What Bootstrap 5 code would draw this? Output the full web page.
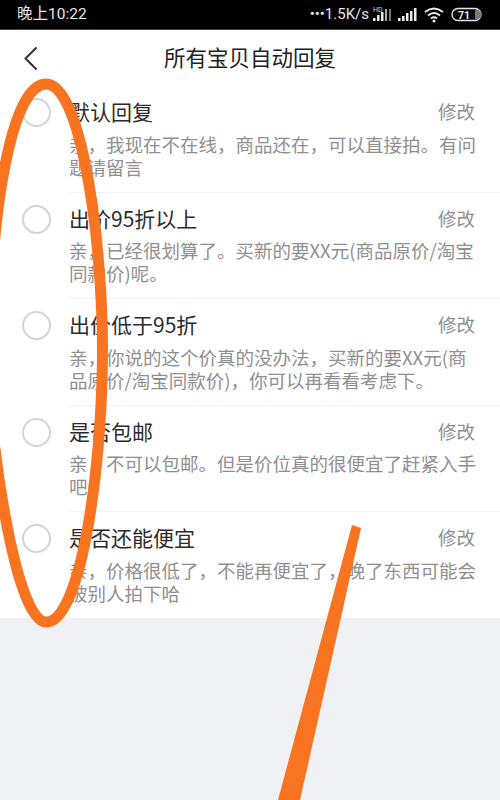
<!DOCTYPE html>
<html lang="zh">
<head>
<meta charset="utf-8">
<title>所有宝贝自动回复</title>
<link rel="stylesheet" href="https://cdn.jsdelivr.net/npm/bootstrap@5.3.0/dist/css/bootstrap.min.css">
<style>
html,body{height:100%;}
body{width:500px;height:800px;overflow:hidden;background:#f0f1f5;font-family:"Noto Sans CJK SC","Roboto",sans-serif;position:relative;}
.sbar{height:30px;background:#000;color:#e6e6e6;font-family:"Roboto","Noto Sans CJK SC",sans-serif;font-size:15.5px;padding:0 17px;border-bottom:1px solid #444;}
.sbar-net{font-size:15px;}
.topbar{height:56px;background:#fff;color:#222;padding-bottom:2px;}
.topbar-title{font-size:21.5px;line-height:1;}
.back-ico{position:absolute;left:24px;top:46px;}
.reply-list{background:#fff;height:532px;}
.reply-row{height:106.5px;padding-left:22px;}
.reply-radio{width:29px;height:29px;border:2px solid #d4d4d4;border-radius:50%;flex:none;margin-top:12px;}
.reply-body{margin-left:18px;padding-right:20px;flex:1;border-bottom:1px solid #f3f3f3;min-width:0;}
.reply-row:last-child .reply-body{border-bottom:0;}
.reply-head{font-size:21px;line-height:28px;color:#2c2c2c;padding-top:11px;}
.reply-edit{font-size:18.5px;color:#8e8e8e;margin-right:5px;}
.reply-text{font-size:18.5px;line-height:23px;color:#8f8f8f;margin-top:7.5px;}
.scribble{position:absolute;left:0;top:0;width:500px;height:800px;pointer-events:none;}
</style>
</head>
<body>
<div class="sbar d-flex align-items-center justify-content-between">
  <span>晚上10:22</span>
  <div class="d-flex align-items-center sbar-net">
    <span>•••1.5K/s</span>
    <svg width="78" height="20" viewBox="0 0 78 20" class="ms-1">
      <text x="0" y="7" font-size="7" fill="#ddd" font-family="Roboto">HD</text>
      <g fill="#eee"><rect x="0" y="13" width="2.5" height="3"/><rect x="4" y="10" width="2.5" height="6"/><rect x="8" y="7" width="2.500" height="9"/><rect x="12" y="4" width="2" height="12" fill="#aaa"/><rect x="16" y="4" width="2" height="12" fill="#777"/></g>
      <g fill="#eee"><rect x="25" y="13" width="2.500" height="3"/><rect x="29" y="11" width="2.500" height="5"/><rect x="33" y="8" width="2.500" height="8"/><rect x="37" y="6" width="2.500" height="10"/><rect x="41" y="3" width="2.500" height="13"/></g>
      <g fill="none" stroke="#eee" stroke-width="1.800"><path d="M52 7Q61 0 70 7"/><path d="M55 10.500Q61 5.500 67 10.500"/><path d="M58 13.500Q61 11 64 13.500"/></g>
      <circle cx="61" cy="16" r="1.500" fill="#eee"/>
    </svg>
    <svg width="32" height="16" viewBox="0 0 32 16">
      <rect x="1" y="1.500" width="29" height="12" rx="6" fill="none" stroke="#e6e6e6" stroke-width="1.300"/>
      <path d="M24 3h2a4.500 4.500 0 0 1 0 9h-2z" fill="#777"/>
      <text x="7" y="11.500" font-size="10.500" font-weight="700" fill="#e6e6e6" font-family="Roboto">71</text>
    </svg>
  </div>
</div>
<div class="topbar d-flex align-items-center justify-content-center">
  <span class="topbar-title">所有宝贝自动回复</span>
</div>
<svg class="back-ico" width="14" height="26" viewBox="0 0 14 26"><path d="M12.500 1.500L1.500 12.500l11 11" fill="none" stroke="#333" stroke-width="2"/></svg>

<div class="reply-list">
  <div class="reply-row d-flex">
    <div class="reply-radio"></div>
    <div class="reply-body">
      <div class="reply-head d-flex justify-content-between"><span>默认回复</span><span class="reply-edit">修改</span></div>
      <div class="reply-text">亲，我现在不在线，商品还在，可以直接拍。有问题请留言</div>
    </div>
  </div>
  <div class="reply-row d-flex">
    <div class="reply-radio"></div>
    <div class="reply-body">
      <div class="reply-head d-flex justify-content-between"><span>出价95折以上</span><span class="reply-edit">修改</span></div>
      <div class="reply-text">亲，已经很划算了。买新的要XX元(商品原价/淘宝同款价)呢。</div>
    </div>
  </div>
  <div class="reply-row d-flex">
    <div class="reply-radio"></div>
    <div class="reply-body">
      <div class="reply-head d-flex justify-content-between"><span>出价低于95折</span><span class="reply-edit">修改</span></div>
      <div class="reply-text">亲，你说的这个价真的没办法，买新的要XX元(商品原价/淘宝同款价)，你可以再看看考虑下。</div>
    </div>
  </div>
  <div class="reply-row d-flex">
    <div class="reply-radio"></div>
    <div class="reply-body">
      <div class="reply-head d-flex justify-content-between"><span>是否包邮</span><span class="reply-edit">修改</span></div>
      <div class="reply-text">亲，不可以包邮。但是价位真的很便宜了赶紧入手吧</div>
    </div>
  </div>
  <div class="reply-row d-flex">
    <div class="reply-radio"></div>
    <div class="reply-body">
      <div class="reply-head d-flex justify-content-between"><span>是否还能便宜</span><span class="reply-edit">修改</span></div>
      <div class="reply-text">亲，价格很低了，不能再便宜了，晚了东西可能会被别人拍下哈</div>
    </div>
  </div>
</div>

<svg class="scribble" viewBox="0 0 500 800">
  <path d="M-8 275C-3 190 14 84 46 84C78 84 98 210 102 320C106 440 84 622 46 622C24 622 4 530 -8 425" fill="none" stroke="#f97420" stroke-width="11"/>
  <polygon points="352,525 361,528 300,800 278,800" fill="#f97420"/>
</svg>
<script src="https://cdn.jsdelivr.net/npm/bootstrap@5.3.0/dist/js/bootstrap.bundle.min.js"></script>
</body>
</html>
